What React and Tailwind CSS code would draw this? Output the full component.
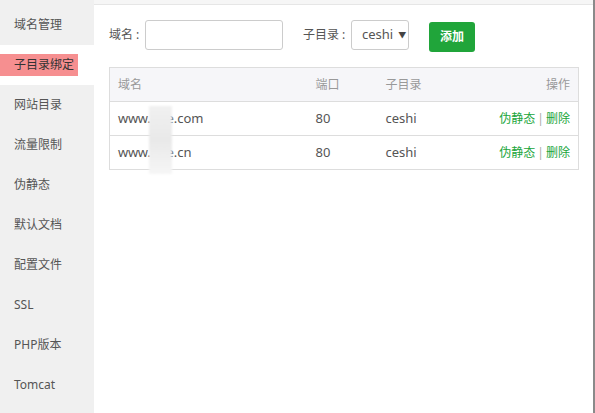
import React from 'react';

const menu = ["域名管理", "子目录绑定", "网站目录", "流量限制", "伪静态", "默认文档", "配置文件", "SSL", "PHP版本", "Tomcat"];

const rows = [
  { pre: "www.", post: "e.com", port: 80, dir: "ceshi" },
  { pre: "www.", post: "e.cn", port: 80, dir: "ceshi" },
];

const Sidebar = () => (
  <div className="w-[94px] shrink-0 bg-[#f0f0f0] pt-[5px]">
    {menu.map((m) =>
      m === "子目录绑定" ? (
        <div key={m} className="h-10 bg-white flex items-center">
          <div className="h-[22px] w-[78px] bg-[#f68f90] pl-[14px] flex items-center text-[12px] text-[#333]">
            {m}
          </div>
        </div>
      ) : (
        <div key={m} className="h-10 pl-[14px] flex items-center text-[12px] text-[#555]">
          {m}
        </div>
      )
    )}
  </div>
);

const Label = ({ text, className }) => (
  <span className={"mt-[6px] flex " + className}>
    {text}
    <span className="ml-[3px]">:</span>
  </span>
);

const App = () => {
  return (
    <div
      className="flex w-[595px] h-[413px] bg-white overflow-hidden"
      style={{ fontFamily: '"Noto Sans", "Noto Sans CJK SC", sans-serif' }}
    >
      <Sidebar />
      <div className="flex-1 flex flex-col border-r-2 border-[#8a8a8a]">
        <div className="h-[5px] bg-[#f6f6f6] border-b border-[#e6e6e6]" />
        <div className="pl-[15px] pr-[14px]">
          <div className="flex items-start mt-[15px] text-[12px] text-[#555]">
            <Label text="域名" className="w-[36px]" />
            <div className="w-[138px] h-[30px] border border-[#ccc] rounded-[3px]" />
            <Label text="子目录" className="ml-[20px] w-[48px]" />
            <div className="w-[58px] h-[30px] border border-[#ccc] rounded-[3px] flex items-center pl-[10px] text-[13px] text-[#555]">
              ceshi
              <span className="ml-[5px] text-[8px] text-[#444]">▼</span>
            </div>
            <button className="ml-[20px] mt-[2px] w-[46px] h-[30px] bg-[#20a53a] rounded-[3px] text-white text-[12px] font-semibold">
              添加
            </button>
          </div>
          <div className="relative mt-[15px] w-[470px]">
            <table className="w-full table-fixed border-collapse border border-[#ddd] text-[12px]">
              <colgroup>
                <col className="w-[198px]" />
                <col className="w-[70px]" />
                <col className="w-[100px]" />
                <col />
              </colgroup>
              <thead>
                <tr className="bg-[#f6f6f9] text-[#999] h-[34px]">
                  <th className="font-normal text-left pl-[8px]">域名</th>
                  <th className="font-normal text-left pl-[8px]">端口</th>
                  <th className="font-normal text-left pl-[8px]">子目录</th>
                  <th className="font-normal text-right pr-[8px]">操作</th>
                </tr>
              </thead>
              <tbody>
                {rows.map((r, i) => (
                  <tr key={i} className="h-[34px] border-t border-[#ddd] text-[#555] text-[13px]">
                    <td className="pl-[8px]">
                      <span className="tracking-[-0.3px]">{r.pre}</span>
                      <span className="inline-block w-[16px]" />
                      {r.post}
                    </td>
                    <td className="pl-[8px]">{r.port}</td>
                    <td className="pl-[8px]">{r.dir}</td>
                    <td className="pr-[8px] text-right text-[12px]">
                      <span className="text-[#20a53a]">伪静态</span>
                      <span className="text-[#aaa] mx-[2px]">|</span>
                      <span className="text-[#20a53a]">删除</span>
                    </td>
                  </tr>
                ))}
              </tbody>
            </table>
            <div className="absolute left-[40px] top-[39px] w-[23px] h-[68px] bg-gradient-to-b from-[#f1f1f1] via-[#e9e9e9] to-[#f6f6f6] blur-[1px]" />
          </div>
        </div>
      </div>
    </div>
  );
};

export default App;
